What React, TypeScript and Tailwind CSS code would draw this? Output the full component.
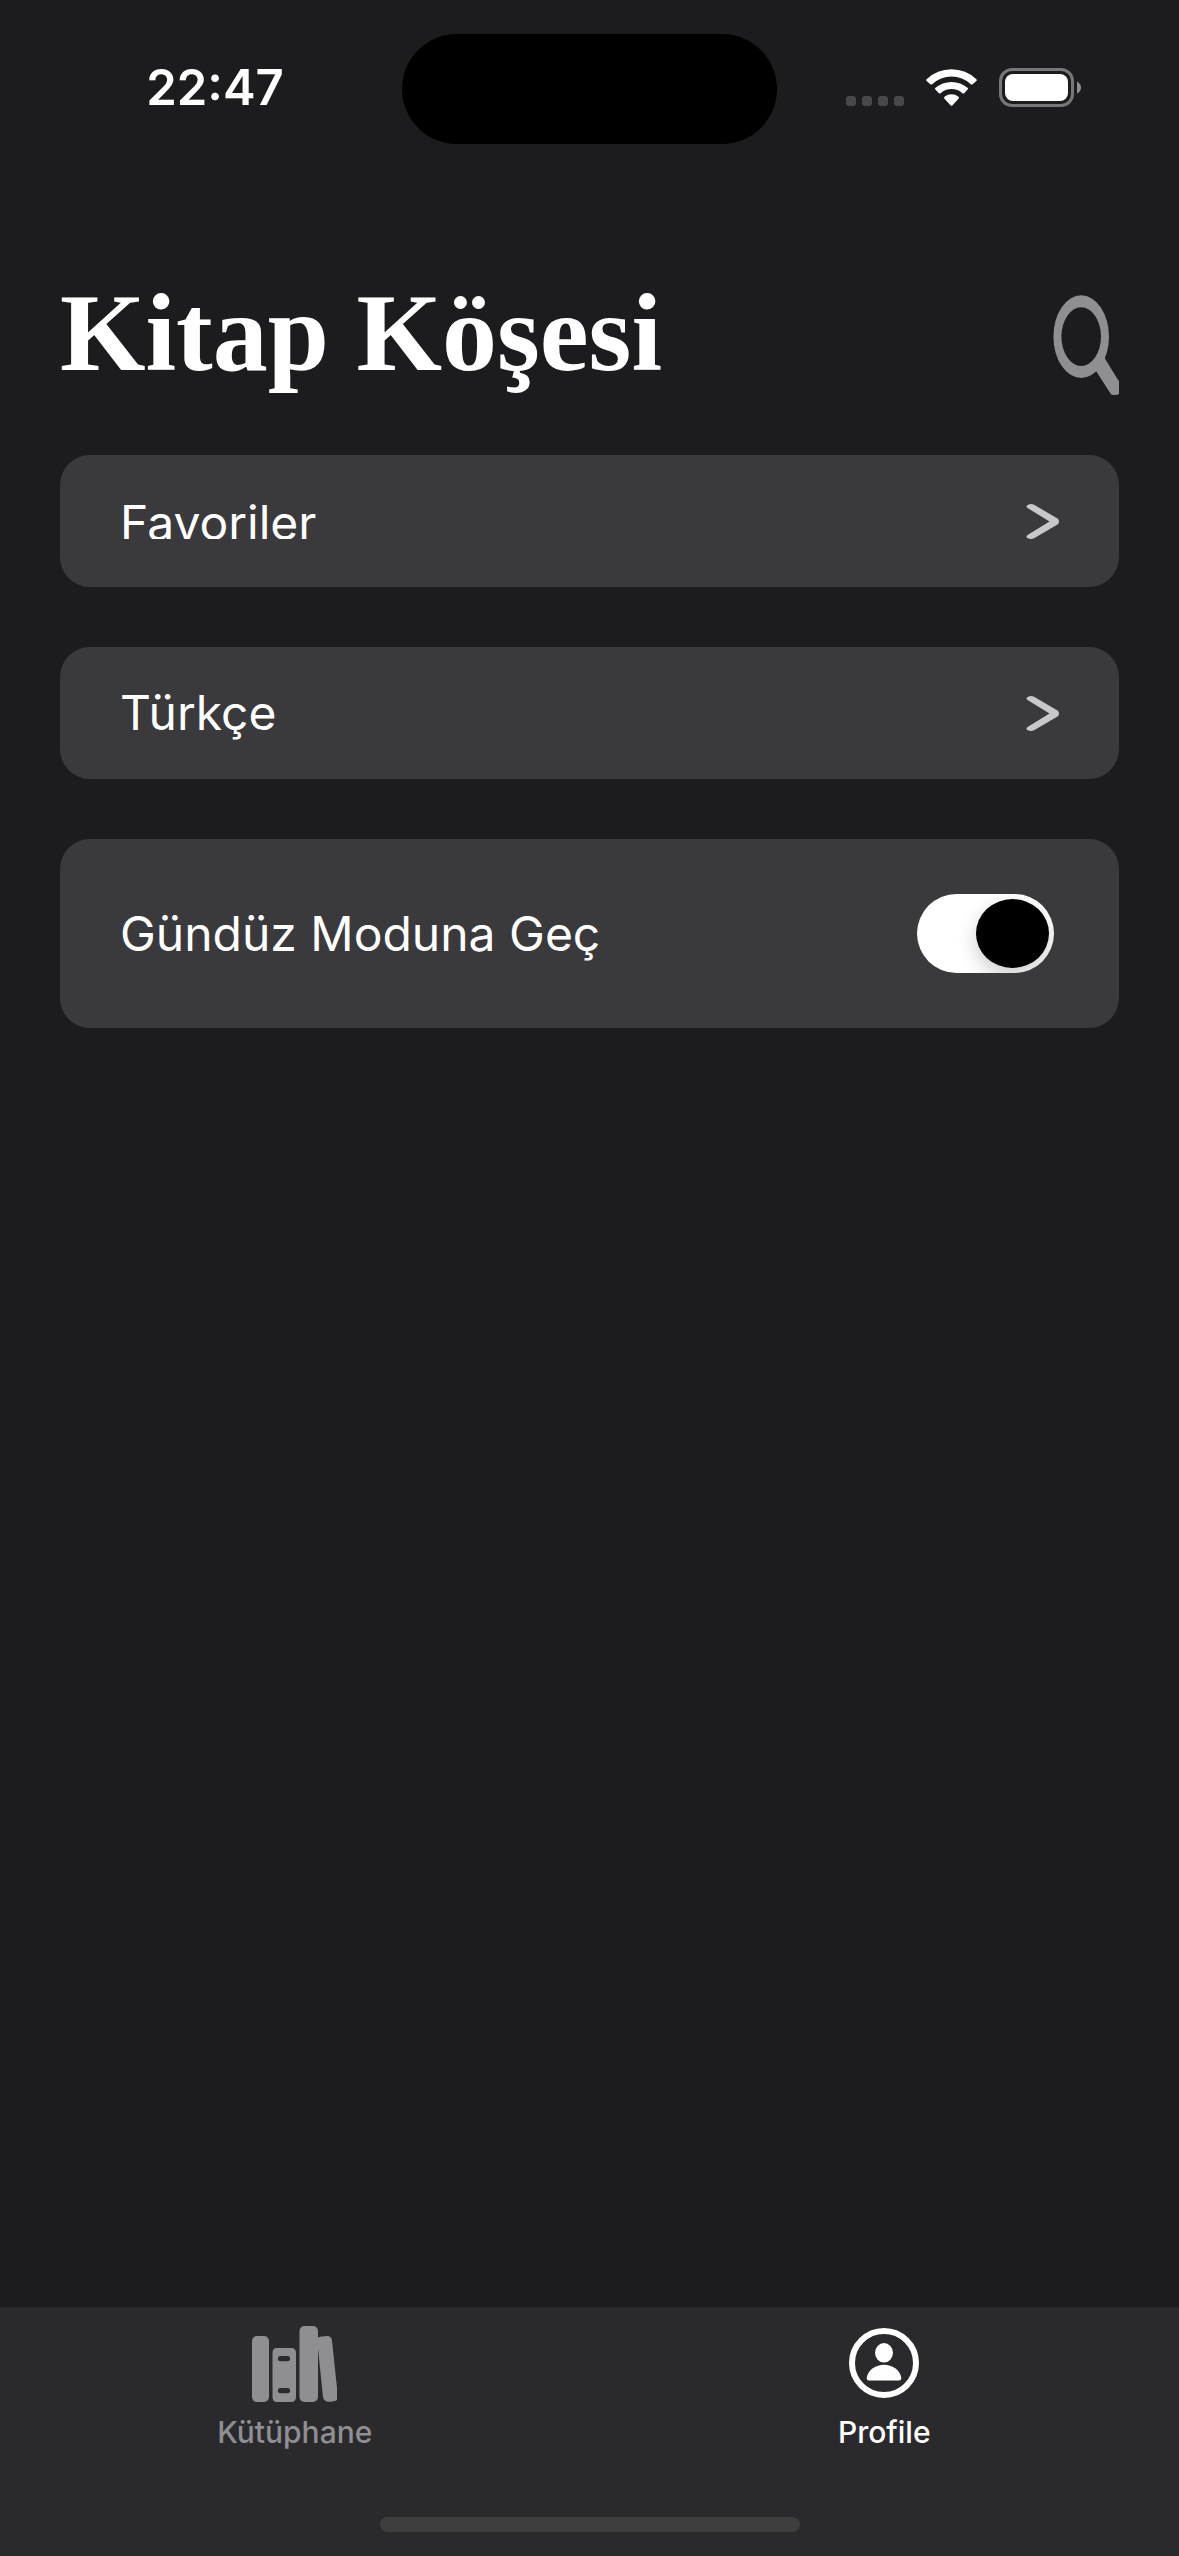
import { useState } from "react";

function StatusBar() {
  return (
    <div className="flex pt-[34px] text-white">
      <div className="flex flex-1 items-center justify-center pb-0.5 pl-7">
        <time className="text-[49px] leading-[60px] font-semibold">22:47</time>
      </div>
      <div className="h-[110px] w-[375px] rounded-full bg-black" />
      <div className="flex flex-1 items-center justify-center pr-7 pb-0.5">
        <svg viewBox="0 0 236 40" className="h-10 w-[236px]" role="img" aria-label="Wi-Fi, battery">
          <g fill="#48484a">
            <rect x="0" y="28" width="10" height="10" rx="3" />
            <rect x="16" y="28" width="10" height="10" rx="3" />
            <rect x="32" y="28" width="10" height="10" rx="3" />
            <rect x="48" y="28" width="10" height="10" rx="3" />
          </g>
          <g fill="#fff">
            <path d="M80.6 11.2 Q79.8 12 80.6 12.9 L84.4 16.2 Q85.3 17 86.2 16.2 A28 28 0 0 1 124.8 16.2 Q125.7 17 126.5 16.2 L130.4 12.9 Q131.2 12 130.4 11.2 A36 36 0 0 0 80.6 11.2 Z" />
            <path d="M89.2 20 Q88.700 20.7 89.2 21.3 L92.8 25.2 Q93.7 26 94.6 25.2 A16.5 16.5 0 0 1 116.4 25.2 Q117.3 26 118.2 25.2 L121.8 21.3 Q122.3 20.7 121.8 20 A25 25 0 0 0 89.2 20 Z" />
            <path d="M98.5 28.7 Q97.5 29.6 98.5 30.7 L104.5 37.3 Q105.5 38.3 106.5 37.3 L112.5 30.7 Q113.5 29.6 112.5 28.7 A11.5 11.5 0 0 0 98.5 28.7 Z" />
            <rect x="159" y="6" width="63" height="27" rx="8" />
          </g>
          <rect x="154.5" y="1.5" width="72" height="36" rx="11.5" fill="none" stroke="#77777a" strokeWidth="3" />
          <path d="M231 13.5 Q235 15.5 235 19.5 Q235 23.5 231 25.5 Z" fill="#8e8e90" />
        </svg>
      </div>
    </div>
  );
}

function SearchIcon() {
  return (
    <svg viewBox="0 0 66 100" className="h-[100px] w-[66px]" aria-hidden="true" fill="#8e8e93">
      <path
        fillRule="evenodd"
        d="M28.2 0.3 A27.8 41.3 0 1 1 28.2 82.9 A27.8 41.3 0 1 1 28.2 0.3 Z M28.2 12.3 A19.8 29.3 0 1 0 28.2 70.9 A19.8 29.3 0 1 0 28.2 12.3 Z"
      />
      <path d="M41 74 L51 62 L64.5 84 L66 86 V99 Q65 100 62 100 H60 Q58.5 100 57.5 98.5 L43 76 Z" />
    </svg>
  );
}

function Chevron() {
  return (
    <svg viewBox="0 0 33 35" className="h-[35px] w-[33px]" aria-hidden="true">
      <path
        d="M3.5 0.2 Q6 -0.4 8.5 1 L31.5 14.5 Q33 15.5 33 17.5 Q33 19.500 31.5 20.5 L8.5 34 Q6 35.4 3.5 34.8 Q-1.5 33.5 1.5 31 L23.500 17.5 L1.5 4 Q-1.5 1.5 3.5 0.2 Z"
        fill="#c7c7cc"
      />
    </svg>
  );
}

function BooksIcon() {
  return (
    <svg viewBox="0 0 85 76" className="h-[76px] w-[85px]" aria-hidden="true" fill="currentColor">
      <rect x="0" y="10" width="17" height="66" rx="5" />
      <path
        fillRule="evenodd"
        d="M25 22 H39 Q44 22 44 27 V71 Q44 76 39 76 H25 Q20.5 76 20.5 71 V27 Q20.5 22 25 22 Z M28.5 30 a2.6 2.6 0 0 0 0 5.2 H35.5 a2.6 2.6 0 0 0 0 -5.2 Z M28.5 62 a2.6 2.6 0 0 0 0 5.2 H35.5 a2.6 2.6 0 0 0 0 -5.2 Z"
      />
      <rect x="47.5" y="0" width="18.5" height="76" rx="5" />
      <path d="M65 13 Q66 11 70 10.6 L75 10 Q79.5 10 80 14.5 L85 62 V74 Q83.5 75 80 75.5 Q72 77 71 71 Z" />
    </svg>
  );
}

function ProfileIcon() {
  return (
    <svg viewBox="0 0 70 76" className="h-[76px] w-[70px]" aria-hidden="true" fill="currentColor">
      <circle cx="35" cy="37" r="32" fill="none" stroke="currentColor" strokeWidth="6" />
      <ellipse cx="35" cy="26.8" rx="9" ry="9.7" />
      <path d="M20 54.5 Q17.5 54.5 17.8 51.5 C19 43.5 27 38.7 35 38.7 C43 38.7 51 43.5 52.2 51.5 Q52.5 54.5 50 54.5 Z" />
    </svg>
  );
}

export default function App() {
  const [dark, setDark] = useState(true);
  return (
    <div className="flex min-h-screen flex-col bg-[#1c1c1e] font-['Inter','Liberation_Sans',sans-serif] text-white">
      <StatusBar />
      <header className="mt-[151px] flex h-[100px] items-start justify-between px-[60px]">
        <h1 className="font-['Liberation_Serif',serif] text-[110px] leading-[76px] font-bold">Kitap Köşesi</h1>
        <button type="button" aria-label="Ara">
          <SearchIcon />
        </button>
      </header>
      <main className="flex flex-1 flex-col gap-[60px] px-[60px] pt-[60px] text-5xl">
        <button type="button" className="flex h-[132px] items-center justify-between rounded-[30px] bg-[#3a3a3c] px-[60px]">
          <span className="h-9 overflow-hidden leading-10">Favoriler</span>
          <Chevron />
        </button>
        <button type="button" className="flex h-[132px] items-center justify-between rounded-[30px] bg-[#3a3a3c] px-[60px]">
          <span className="leading-[60px]">Türkçe</span>
          <Chevron />
        </button>
        <label className="flex h-[189px] items-center justify-between rounded-[30px] bg-[#3a3a3c] pr-[65px] pl-[60px]">
          <span className="leading-[60px]">Gündüz Moduna Geç</span>
          <input
            type="checkbox"
            role="switch"
            checked={dark}
            onChange={(e) => setDark(e.target.checked)}
            className="flex h-[79px] w-[137px] appearance-none items-center overflow-hidden rounded-full bg-[#636366] px-[5px] before:h-[69px] before:w-[73px] before:rounded-[50%] before:bg-black before:shadow-[0_8px_20px_rgba(0,0,0,0.2)] checked:justify-end checked:bg-white"
          />
        </label>
      </main>
      <nav className="bg-[#2a2a2c] pb-6">
        <div className="flex h-[210px] items-start pt-[19px] text-3xl leading-9 font-medium">
          <button type="button" className="flex flex-1 flex-col items-center gap-3 text-[#8e8e93]">
            <BooksIcon />
            <span className="leading-9">Kütüphane</span>
          </button>
          <button type="button" aria-current="page" className="flex flex-1 flex-col items-center gap-3 text-white">
            <ProfileIcon />
            <span className="leading-9">Profile</span>
          </button>
        </div>
        <div className="mx-auto h-[15px] w-[420px] rounded-full bg-[#3e3e3e]" />
      </nav>
    </div>
  );
}
